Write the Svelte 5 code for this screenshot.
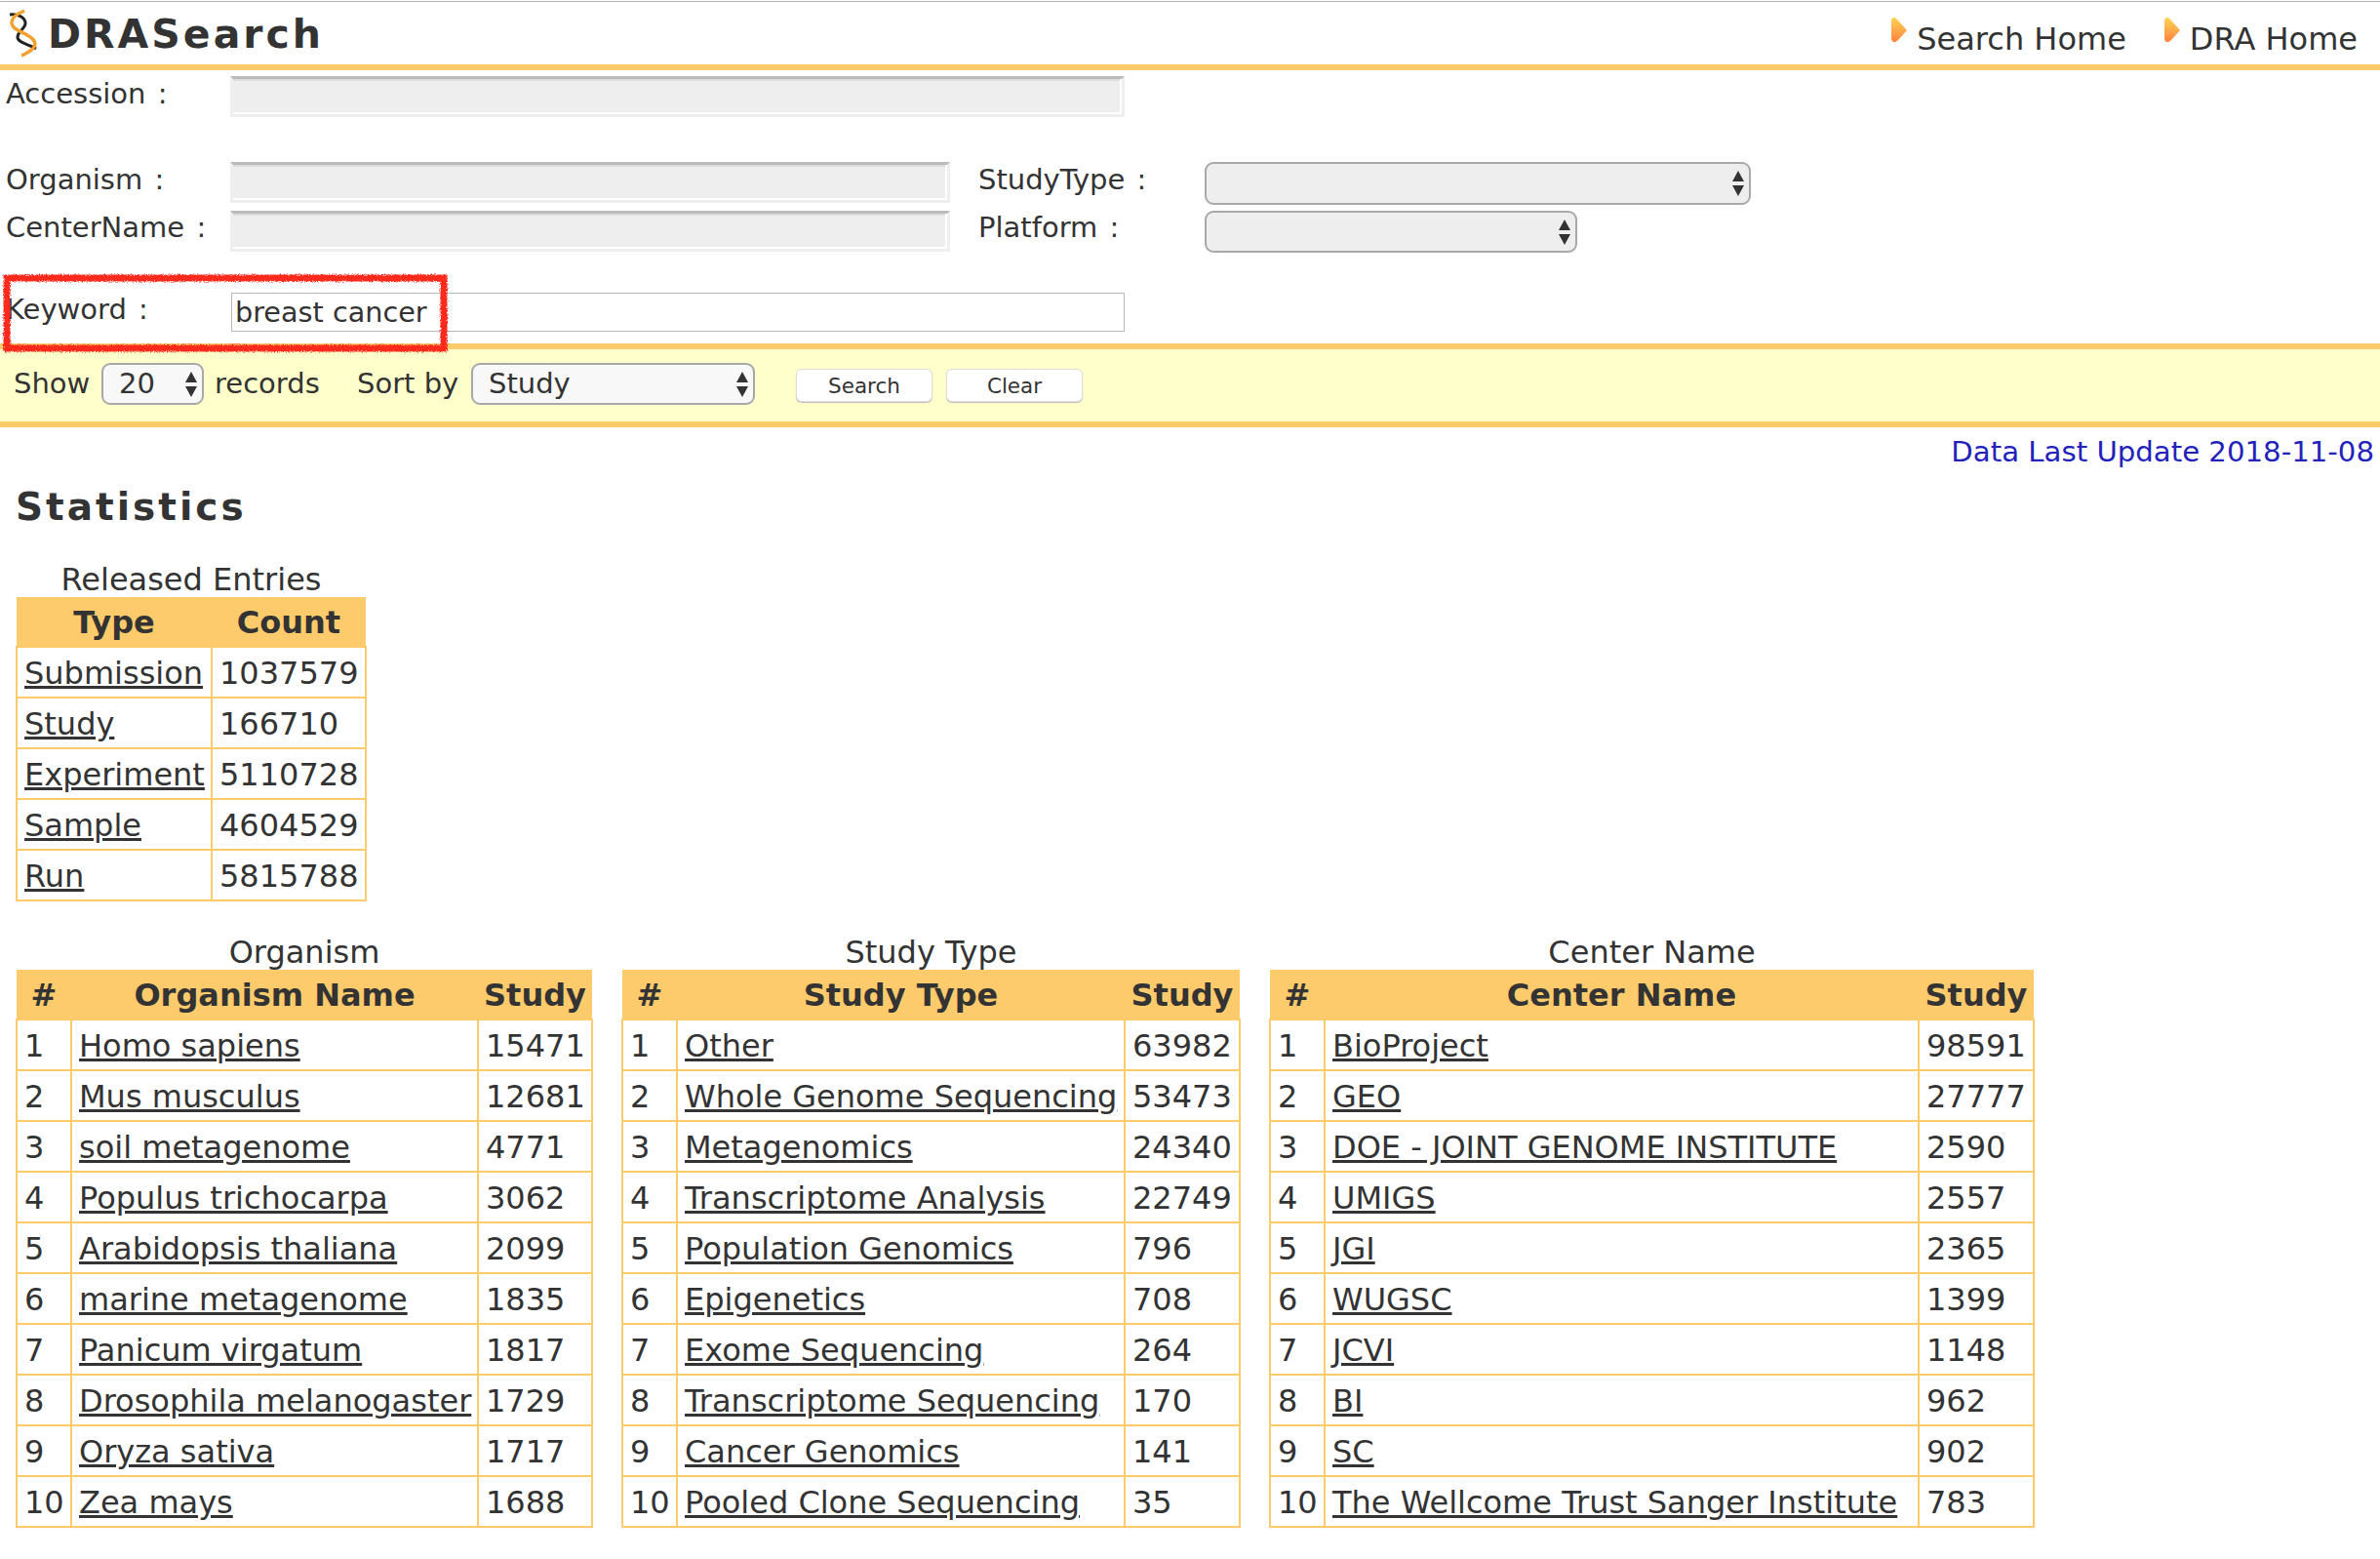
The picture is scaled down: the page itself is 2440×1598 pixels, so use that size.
<script>
  const entries = [
    ["Submission", 1037579],
    ["Study", 166710],
    ["Experiment", 5110728],
    ["Sample", 4604529],
    ["Run", 5815788]
  ];

  const stats = [
    {
      title: "Organism",
      head: "Organism Name",
      widths: [56, 417, 117],
      rows: [
        ["Homo sapiens", 15471],
        ["Mus musculus", 12681],
        ["soil metagenome", 4771],
        ["Populus trichocarpa", 3062],
        ["Arabidopsis thaliana", 2099],
        ["marine metagenome", 1835],
        ["Panicum virgatum", 1817],
        ["Drosophila melanogaster", 1729],
        ["Oryza sativa", 1717],
        ["Zea mays", 1688]
      ]
    },
    {
      title: "Study Type",
      head: "Study Type",
      widths: [56, 459, 118],
      rows: [
        ["Other", 63982],
        ["Whole Genome Sequencing", 53473],
        ["Metagenomics", 24340],
        ["Transcriptome Analysis", 22749],
        ["Population Genomics", 796],
        ["Epigenetics", 708],
        ["Exome Sequencing", 264],
        ["Transcriptome Sequencing", 170],
        ["Cancer Genomics", 141],
        ["Pooled Clone Sequencing", 35]
      ]
    },
    {
      title: "Center Name",
      head: "Center Name",
      widths: [56, 609, 118],
      rows: [
        ["BioProject", 98591],
        ["GEO", 27777],
        ["DOE - JOINT GENOME INSTITUTE", 2590],
        ["UMIGS", 2557],
        ["JGI", 2365],
        ["WUGSC", 1399],
        ["JCVI", 1148],
        ["BI", 962],
        ["SC", 902],
        ["The Wellcome Trust Sanger Institute", 783]
      ]
    }
  ];
</script>

{#snippet arrows()}
  <svg class="arrows" width="14" height="28" viewBox="0 0 14 28">
    <path d="M7 1 L13 12 H1 Z M7 27 L13 16 H1 Z" fill="#333" />
  </svg>
{/snippet}

{#snippet pointer()}
  <svg width="17" height="26" viewBox="0 0 17 26">
    <path d="M3 0 Q5 0 7 3 L16 13 L7 23 Q4 26 2 25 Q0 24 0 22 V3 Q0 0 3 0 Z" fill="url(#tip)" />
  </svg>
{/snippet}

<svg class="defs" width="0" height="0">
  <defs>
    <linearGradient id="tip" x1="0" y1="0" x2="0" y2="1">
      <stop offset="0" stop-color="#ffd257" />
      <stop offset="1" stop-color="#f9843c" />
    </linearGradient>
    <filter id="rough" x="-5%" y="-10%" width="110%" height="120%">
      <feTurbulence type="fractalNoise" baseFrequency="0.7" numOctaves="2" seed="3" />
      <feDisplacementMap in="SourceGraphic" scale="4" />
    </filter>
  </defs>
</svg>

<div class="page">
  <header>
    <div class="brand">
      <svg width="30" height="50" viewBox="0 0 30 50">
        <path d="M1 5 C8 4 16 7 17 13 C18 19 9 22 9 28 C9 34 22 36 28 40" fill="none" stroke="#222" stroke-width="3" />
        <path d="M16 1 C9 4 2 8 3 14 C4 21 14 22 22 28 C29 33 28 38 22 42 C19 44 16 46 13 47" fill="none" stroke="#f3a02e" stroke-width="3.4" />
      </svg>
      <span>DRASearch</span>
    </div>
    <nav>
      <a href="#search">{@render pointer()}<span>Search Home</span></a>
      <a href="#dra">{@render pointer()}<span>DRA Home</span></a>
    </nav>
  </header>

  <form>
    <div class="row accession">
      <span class="label">Accession :</span>
      <input class="off wide" disabled />
    </div>
    <div class="row organism">
      <span class="label">Organism :</span>
      <input class="off mid" disabled />
      <span class="label second">StudyType :</span>
      <span class="select off-select study">{@render arrows()}</span>
    </div>
    <div class="row center">
      <span class="label">CenterName :</span>
      <input class="off mid" disabled />
      <span class="label second">Platform :</span>
      <span class="select off-select platform">{@render arrows()}</span>
    </div>
    <div class="row keyword">
      <span class="label">Keyword :</span>
      <input class="on" value="breast cancer" />
    </div>
    <svg class="mark" width="468" height="90" viewBox="0 0 468 90">
      <rect x="7" y="7" width="448" height="72" fill="none" stroke="#ff2a1a" stroke-width="7" filter="url(#rough)" />
    </svg>
  </form>

  <div class="bar">
    <span class="show">Show</span>
    <span class="select count">20{@render arrows()}</span>
    <span class="records">records</span>
    <span class="sort">Sort by</span>
    <span class="select order">Study{@render arrows()}</span>
    <button type="button" class="search">Search</button>
    <button type="button" class="clear">Clear</button>
  </div>

  <p class="updated">Data Last Update 2018-11-08</p>

  <h2>Statistics</h2>

  <table class="entries">
    <caption>Released Entries</caption>
    <colgroup>
      <col style="width:200px" />
      <col style="width:158px" />
    </colgroup>
    <thead>
      <tr><th>Type</th><th>Count</th></tr>
    </thead>
    <tbody>
      {#each entries as [name, count]}
        <tr><td><a href="#entry">{name}</a></td><td>{count}</td></tr>
      {/each}
    </tbody>
  </table>

  <div class="tables">
    {#each stats as table}
      <table>
        <caption>{table.title}</caption>
        <colgroup>
          {#each table.widths as w}
            <col style="width:{w}px" />
          {/each}
        </colgroup>
        <thead>
          <tr><th>#</th><th>{table.head}</th><th>Study</th></tr>
        </thead>
        <tbody>
          {#each table.rows as [name, count], i}
            <tr><td>{i + 1}</td><td><a href="#row">{name}</a></td><td>{count}</td></tr>
          {/each}
        </tbody>
      </table>
    {/each}
  </div>
</div>

<style>
  :global(body) {
    background: #fff;
  }

  .page {
    font-family: "DejaVu Sans", Verdana, sans-serif;
    font-size: 32px;
    color: #333;
    height: 1598px;
    overflow: hidden;
  }

  .defs {
    position: absolute;
  }

  header {
    display: flex;
    justify-content: space-between;
    align-items: flex-start;
    height: 64px;
    margin-top: 1px;
    border-top: 1px solid #b5b5b5;
    border-bottom: 6px solid #fecb6c;
  }

  .brand {
    display: flex;
    align-items: center;
    padding: 8px 0 0 9px;
    gap: 10px;
  }

  .brand span {
    font-size: 41px;
    font-weight: bold;
    letter-spacing: 3px;
    line-height: 46px;
  }

  nav {
    display: flex;
    gap: 39px;
    padding: 16px 23px 0 0;
  }

  nav a {
    display: flex;
    align-items: flex-start;
    gap: 9px;
    color: #333;
    text-decoration: none;
    font-size: 32px;
    line-height: 44px;
  }

  form {
    position: relative;
    height: 280px;
    font-size: 29px;
  }

  .row {
    display: flex;
    position: relative;
  }

  .label {
    width: 230px;
    padding-left: 6px;
    line-height: 34px;
    word-spacing: 3px;
  }

  .accession .label,
  .organism .label {
    padding-top: 1px;
  }

  .second {
    width: 261px;
    padding-left: 29px;
    box-sizing: border-box;
  }

  .accession {
    padding-top: 6px;
  }

  .organism {
    padding-top: 46px;
  }

  .center {
    padding-top: 8px;
  }

  .keyword {
    padding-top: 41px;
  }

  input {
    box-sizing: border-box;
    margin: 0;
    font: inherit;
    color: #333;
    outline: none;
  }

  .off {
    height: 42px;
    background: #eee;
    border: 3px solid #eee;
    border-top: 3px solid #bbb;
    box-shadow: inset 0 -2px 0 #fff, inset -2px 0 0 #fff, inset 0 2px 0 #ddd;
  }

  .wide {
    width: 917px;
  }

  .mid {
    width: 738px;
  }

  .on {
    width: 916px;
    height: 40px;
    margin-left: 1px;
    padding: 0 3px;
    border: 1px solid #b8b8b8;
    background: #fff;
    font-size: 28.7px;
  }

  .mark {
    position: absolute;
    left: 0;
    top: 206px;
    z-index: 2;
    overflow: visible;
  }

  .select {
    position: relative;
    display: inline-block;
    box-sizing: border-box;
    height: 43px;
    border: 2px solid #a8a8a8;
    border-radius: 9px;
    background: #f8f8f8;
    line-height: 38px;
  }

  .off-select {
    background: #eee;
  }

  .study {
    width: 560px;
    height: 44px;
    margin-bottom: -2px;
  }

  .platform {
    width: 382px;
  }

  .arrows {
    position: absolute;
    right: 4px;
    top: 6px;
  }

  .bar {
    display: flex;
    align-items: flex-start;
    height: 74px;
    border-top: 6px solid #fecb6c;
    border-bottom: 6px solid #fecb6c;
    background: #ffffcc;
    font-size: 29px;
  }

  .show {
    margin: 18px 0 0 14px;
    width: 90px;
  }

  .count {
    width: 105px;
    margin-top: 14px;
    padding-left: 16px;
  }

  .records {
    margin: 18px 0 0 11px;
    width: 146px;
  }

  .sort {
    margin-top: 18px;
    width: 117px;
  }

  .order {
    width: 291px;
    margin-top: 14px;
    padding-left: 16px;
  }

  button {
    width: 140px;
    height: 34px;
    margin-top: 20px;
    padding: 0;
    border: 1px solid #ddd;
    border-radius: 6px;
    background: #fff;
    box-shadow: 0 1px 1px #bbb;
    font: 21.5px "DejaVu Sans", Verdana, sans-serif;
    color: #333;
  }

  .search {
    margin-left: 42px;
  }

  .clear {
    margin-left: 14px;
  }

  .updated {
    margin: 7px 6px 0 0;
    text-align: right;
    font-size: 29.2px;
    line-height: 36px;
    color: #2222bb;
  }

  h2 {
    margin: 16px 0 0 16px;
    font-size: 39px;
    line-height: 46px;
    letter-spacing: 3px;
  }

  table {
    table-layout: fixed;
    border-collapse: collapse;
    border-spacing: 0;
    width: 0;
  }

  caption {
    line-height: 36px;
    white-space: nowrap;
  }

  th {
    height: 48px;
    padding: 2px 0 0;
    background: #fecb6c;
    font-weight: bold;
    text-align: center;
    border: 0;
    white-space: nowrap;
  }

  td {
    height: 48px;
    padding: 2px 0 0 7px;
    border: 2px solid #fecb6c;
    white-space: nowrap;
    overflow: hidden;
  }

  a {
    color: #333;
    text-decoration: underline;
  }

  .entries {
    margin: 33px 0 0 16px;
  }

  .tables {
    display: flex;
    align-items: flex-start;
    gap: 29px;
    margin: 34px 0 0 16px;
  }
</style>
